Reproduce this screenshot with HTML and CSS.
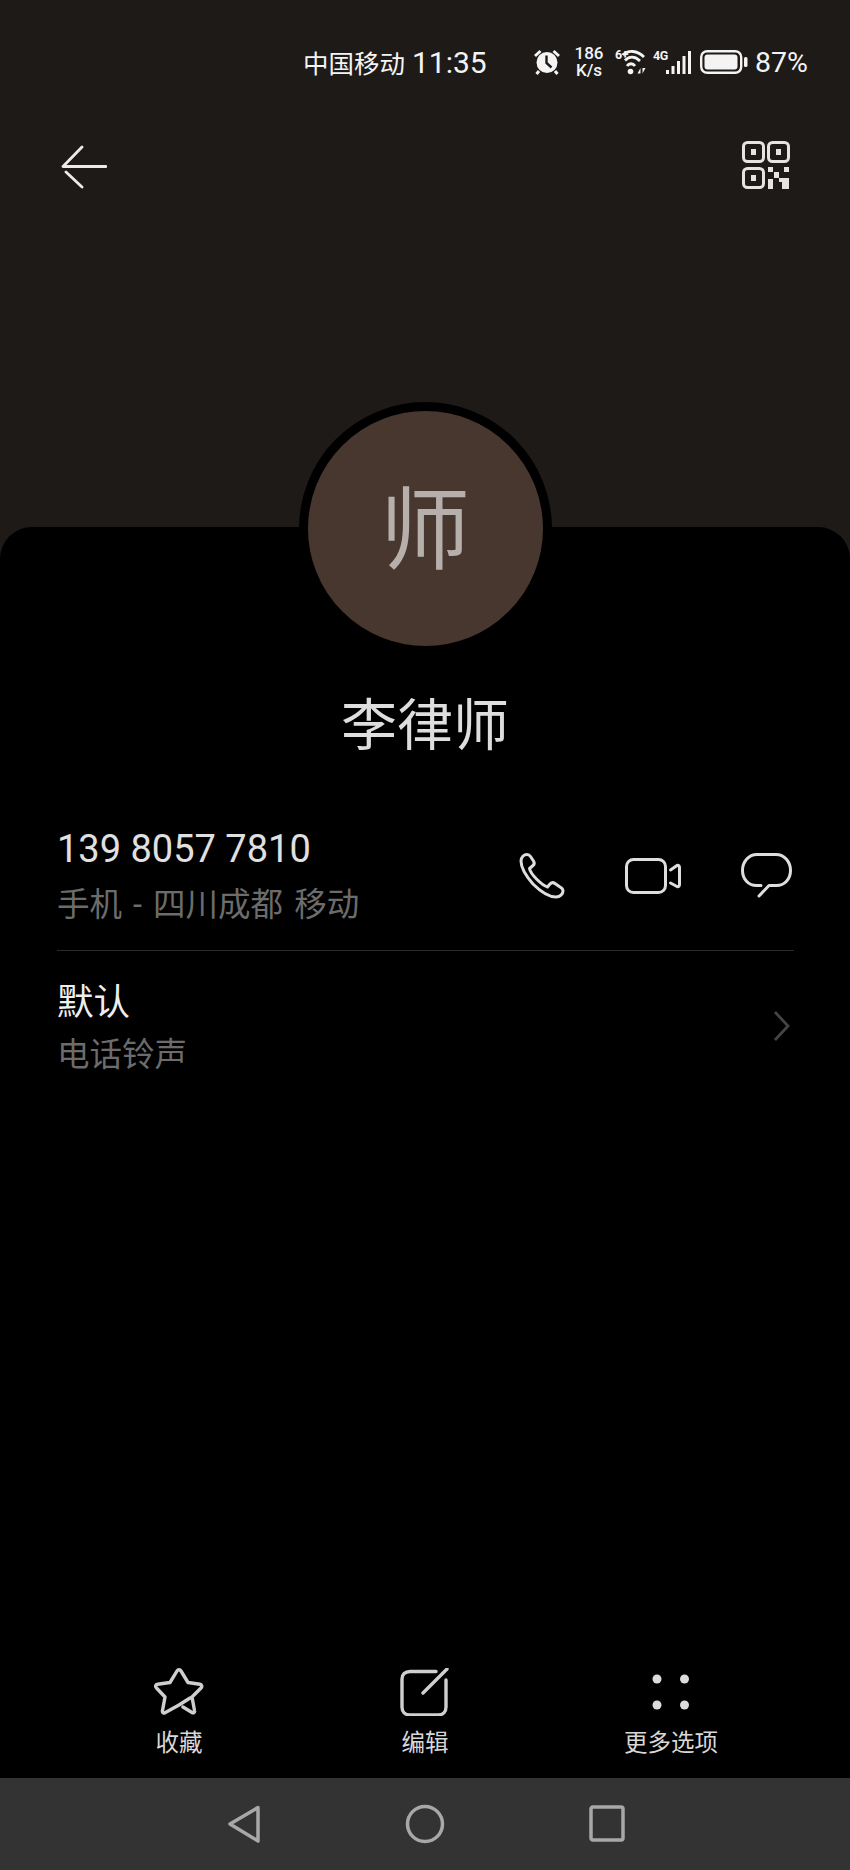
FILE: index.html
```html
<!DOCTYPE html>
<html lang="zh-CN">
<head>
  <meta charset="UTF-8">
  <title>联系人详情</title>
  <link rel="stylesheet" href="styles.css">
</head>
<body>
  <div class="page">
    <header class="top">
      <div class="statusbar">
        <span class="carrier">中国移动</span>
        <span class="clock">11:35</span>
        <svg class="ic-alarm" width="26" height="26" viewBox="0 0 26 26">
          <circle cx="13" cy="13.500" r="10.500" fill="#f4f4f4"/>
          <path d="M12.500 6.500V14L17.500 18.500" fill="none" stroke="#1e1a18" stroke-width="2.400"/>
          <path d="M1 7L6.500 2M25 7L19.500 2M5 22L2.500 25M21 22L23.500 25" stroke="#f4f4f4" stroke-width="3" fill="none"/>
        </svg>
        <span class="speed"><b>186</b><b>K/s</b></span>
        <svg class="ic-wifi" width="32" height="29" viewBox="0 -3 32 29">
          <text x="0" y="10" class="tiny">6+</text>
          <path d="M8 6C13 1 22 1 29 8M10 11.500C14 7 20 7 25 12M12 17C14 14 18 14 20 17" fill="none" stroke="#f4f4f4" stroke-width="2.800"/>
          <circle cx="15.500" cy="22.500" r="2.800" fill="#f4f4f4"/>
          <path d="M22.500 24.500L25.500 19V24.500ZM27.500 19V24.500L30.500 19Z" fill="#f4f4f4"/>
        </svg>
        <svg class="ic-signal" width="38" height="28" viewBox="0 -3 38 28">
          <text x="0" y="10" class="tiny">4G</text>
          <path d="M14.500 20V24M20 16V24M25.500 11V24M31 6V24M36.500 1V24" stroke="#f4f4f4" stroke-width="3" fill="none"/>
        </svg>
        <svg class="ic-battery" width="48" height="24" viewBox="0 0 48 24">
          <rect x="1.200" y="1.200" width="40" height="21.600" rx="6" fill="none" stroke="#f4f4f4" stroke-width="2.400"/>
          <rect x="4.500" y="4.500" width="33" height="15" rx="3" fill="#f4f4f4"/>
          <rect x="44" y="7" width="3.500" height="10" rx="1.500" fill="#f4f4f4"/>
        </svg>
        <span class="percent">87%</span>
      </div>
      <div class="toolbar">
        <svg class="back" width="46" height="44" viewBox="0 0 46 44">
          <path d="M21 2L2 21.500H45M5 27L21 42" fill="none" stroke="#eeeae8" stroke-width="2.800" stroke-linecap="round" stroke-linejoin="round"/>
        </svg>
        <svg class="qr" width="48" height="48" viewBox="0 0 48 48">
          <g fill="none" stroke="#e6e3e1" stroke-width="3">
            <rect x="1.500" y="1.500" width="20" height="19" rx="4"/>
            <rect x="26.500" y="1.500" width="20" height="19" rx="4"/>
            <rect x="1.500" y="27.500" width="20" height="19" rx="4"/>
          </g>
          <g fill="#e6e3e1">
            <rect x="9" y="8" width="5" height="6"/>
            <rect x="34" y="8" width="5" height="6"/>
            <rect x="9" y="34" width="5" height="6"/>
            <rect x="26" y="26" width="5" height="5"/>
            <rect x="42" y="26" width="5" height="5"/>
            <rect x="32" y="31" width="5" height="6"/>
            <rect x="26" y="38" width="5" height="10"/>
            <rect x="37" y="37" width="10" height="4"/>
            <rect x="40" y="41" width="7" height="7"/>
          </g>
        </svg>
      </div>
    </header>

    <main class="card">
      <div class="avatar"><span>师</span></div>
      <h1 class="name">李律师</h1>

      <section class="rows">
        <div class="row row-phone">
          <div class="row-text">
            <div class="number">139 8057 7810</div>
            <div class="sub">手机 - 四川成都 移动</div>
          </div>
          <div class="actions">
            <svg width="46" height="46" viewBox="0 0 46 46">
              <path d="M8 1.500C5 1.500 2 4 2 8C2 14 7 23 14 31C21 38 29 44 37 44C41 44 44 41 44 38C44 36 43 35 41 34L36 30.500C34 29 32 29.500 30.500 31.500L28.500 34C25 33 21 29.500 17.500 26C14 22.500 11 18 10.500 15.500L13.500 13C15.500 11.500 15.500 9.500 14.500 8L11.500 3.500C10.500 2 9.500 1.500 8 1.500Z" class="line"/>
            </svg>
            <svg width="56" height="36" viewBox="0 0 56 36">
              <rect x="1.500" y="1.500" width="39" height="33" rx="7" class="line"/>
              <path d="M45.500 12L52 7.500C53.500 7 54.500 8 54.500 9.500V26.500C54.500 28 53.500 29 52 28.500L45.500 25" class="line"/>
            </svg>
            <svg width="51" height="45" viewBox="0 0 51 45">
              <path d="M20 32.500H15.500C7.500 32.500 1.500 26 1.500 17.500C1.500 9 7.500 1.500 16 1.500H35C43.500 1.500 49.500 9 49.500 17.500C49.500 26 43.500 32.500 35.500 32.500H28L18 43" class="line"/>
            </svg>
          </div>
        </div>
        <div class="row row-ring">
          <div class="row-text">
            <div class="ring-title">默认</div>
            <div class="sub">电话铃声</div>
          </div>
          <svg class="chevron" width="17" height="32" viewBox="0 0 17 32">
            <path d="M2 2L15 16L2 30" fill="none" stroke="#444" stroke-width="2.800"/>
          </svg>
        </div>
      </section>

      <footer class="tabs">
        <div class="tab">
          <svg width="50" height="48" viewBox="0 0 50 48">
            <path d="M29 39L38 44.500C39.500 45.500 41 44 40.500 42.500L38 29L47 20C48.500 18.500 47.500 16.500 46 16.300L34 14.500L27 3C26 1.300 24 1.300 23 3L16 14.500L3.500 16.300C1.500 16.500 1 18.500 2.500 20L11 29L8.500 42.500C8 44.500 9.500 45.500 11 44.700L25 37L36 30" class="line tab-line"/>
          </svg>
          <span>收藏</span>
        </div>
        <div class="tab">
          <svg width="50" height="48" viewBox="0 0 50 48">
            <path d="M36 3.500H10C5 3.500 2 6.500 2 11V39C2 44 5 47 10 47H38C43 47 46 44 46 39V12M23 25L47 1" class="line tab-line"/>
          </svg>
          <span>编辑</span>
        </div>
        <div class="tab">
          <svg width="50" height="48" viewBox="0 0 50 48">
            <g fill="#dcdcdc">
              <circle cx="11" cy="11" r="4.500"/>
              <circle cx="38.500" cy="11" r="4.500"/>
              <circle cx="11" cy="37" r="4.500"/>
              <circle cx="38.500" cy="37" r="4.500"/>
            </g>
          </svg>
          <span>更多选项</span>
        </div>
      </footer>
    </main>

    <nav class="navbar">
      <svg width="36" height="42" viewBox="0 0 36 42">
        <path d="M32 4.500L4 21L32 38Z" class="nav-line"/>
      </svg>
      <svg width="42" height="42" viewBox="0 0 42 42">
        <circle cx="21" cy="21" r="17.500" class="nav-line"/>
      </svg>
      <svg width="36" height="38" viewBox="0 0 36 38">
        <rect x="2" y="2" width="32" height="33" rx="2" class="nav-line"/>
      </svg>
    </nav>
  </div>
</body>
</html>
```

FILE: styles.css
```css
* { box-sizing: border-box; }
html, body { margin: 0; padding: 0; }
body {
  background: #000;
  color: #eee;
  font-family: Roboto, "Noto Sans CJK SC", sans-serif;
}
.page {
  width: 850px;
  height: 1870px;
  display: flex;
  flex-direction: column;
  overflow: hidden;
  background: #1e1a18;
}
svg { display: block; flex: none; }
.line {
  fill: none;
  stroke: #dedede;
  stroke-width: 3;
  stroke-linejoin: round;
  stroke-linecap: round;
}

/* top area */
.top {
  height: 527px;
  flex: none;
}
.statusbar {
  height: 124px;
  display: flex;
  align-items: center;
  padding: 0 42px 0 303px;
  color: #f4f4f4;
}
.carrier { font-size: 25.500px; width: 109px; margin-top: -2px; }
.clock { font-size: 30px; width: 122px; }
.speed {
  width: 30px;
  margin-right: 11px;
  display: flex;
  flex-direction: column;
  align-items: center;
  line-height: 17px;
}
.speed b { font-weight: 500; font-size: 17px; }
.ic-alarm { margin-right: 14px; }
.ic-wifi { margin-right: 6px; margin-top: -3px; }
.ic-signal { margin-right: 9px; margin-top: -3px; }
.ic-battery { margin-right: 7px; }
.percent { font-size: 28.500px; }
.tiny { font: 700 12.500px Roboto, sans-serif; fill: #f4f4f4; letter-spacing: -0.500px; }
.toolbar {
  height: 82px;
  display: flex;
  align-items: center;
  justify-content: space-between;
  padding: 0 60px 0 61px;
}
.back { margin-top: 3px; }

/* card */
.card {
  flex: 1;
  background: #000;
  border-radius: 32px 32px 0 0;
  display: flex;
  flex-direction: column;
  align-items: center;
}
.avatar {
  width: 253px;
  height: 253px;
  margin-top: -125px;
  padding-bottom: 12px;
  flex: none;
  border: 9px solid #000;
  border-radius: 50%;
  background: #47372f;
  display: flex;
  align-items: center;
  justify-content: center;
  color: #b6afab;
  font-size: 90px;
}
.name {
  margin: 31px 0 0;
  font-size: 56px;
  line-height: 80px;
  font-weight: 400;
  color: #dedede;
}

.rows {
  width: 100%;
  padding: 0 56px 0 57px;
  margin-top: 35px;
}
.row {
  display: flex;
  align-items: center;
  justify-content: space-between;
}
.row-phone {
  height: 150px;
  border-bottom: 1px solid #2a2a2a;
}
.row-ring { height: 153px; }
.number { font-size: 38px; line-height: 50px; color: #e0e0e0; margin-bottom: 8px; }
.sub { font-size: 32.500px; line-height: 46px; color: #6c6c6c; word-spacing: 3px; }
.ring-title { font-size: 36.500px; line-height: 50px; color: #eee; margin-bottom: 4px; }
.actions {
  display: flex;
  align-items: center;
  gap: 60px;
  padding-right: 2px;
}
.chevron { margin: 0 4px 3px 0; }

/* bottom tabs */
.tabs {
  margin-top: auto;
  width: 100%;
  height: 124px;
  display: flex;
  justify-content: space-between;
  padding: 14px 129px 0;
}
.tab {
  width: 100px;
  display: flex;
  flex-direction: column;
  align-items: center;
  font-size: 23.500px;
  color: #d8d8d8;
}
.tab span { margin-top: 10px; line-height: 34px; white-space: nowrap; }
.tab-line { stroke: #cfcfcf; stroke-width: 3.400; }

/* system nav */
.navbar {
  height: 92px;
  flex: none;
  background: #333;
  display: flex;
  align-items: center;
  justify-content: center;
  gap: 142.500px;
}
.nav-line {
  fill: none;
  stroke: #a8a8a8;
  stroke-width: 3.500;
  stroke-linejoin: round;
}
```
